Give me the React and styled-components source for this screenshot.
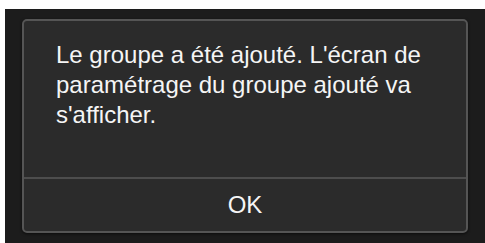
import React from 'react';
import styled, { createGlobalStyle } from 'styled-components';

const GlobalStyle = createGlobalStyle`
  html, body {
    margin: 0;
    padding: 0;
    background: #ffffff;
  }
  body {
    font-family: "Liberation Sans", Arial, sans-serif;
  }
`;

const Screen = styled.div`
  margin: 9px 0 0 5px;
  height: 234px;
  background: #1c1c1c;
  box-sizing: border-box;
  padding: 10px 17px 10px 17px;
`;

const Dialog = styled.div`
  height: 214px;
  background: #2b2b2b;
  border: 2px solid #555555;
  border-radius: 5px;
  box-sizing: border-box;
  display: flex;
  flex-direction: column;
  box-shadow: 0 1px 3px rgba(0, 0, 0, 0.6);
`;

const Message = styled.p`
  flex: 1;
  margin: 0;
  padding: 19px 24px 0 32px;
  color: #f5f5f5;
  font-size: 24px;
  line-height: 30px;
`;

const Divider = styled.div`
  height: 2px;
  background: #4d4d4d;
`;

const Button = styled.button`
  height: 52px;
  background: transparent;
  border: none;
  color: #f5f5f5;
  font-family: inherit;
  font-size: 24px;
  cursor: pointer;
  padding: 0;
`;

const App = () => {
  return (
    <>
      <GlobalStyle />
      <Screen>
        <Dialog>
          <Message>
            Le groupe a été ajouté. L'écran de paramétrage du groupe ajouté va s'afficher.
          </Message>
          <Divider />
          <Button>OK</Button>
        </Dialog>
      </Screen>
    </>
  );
};

export default App;
